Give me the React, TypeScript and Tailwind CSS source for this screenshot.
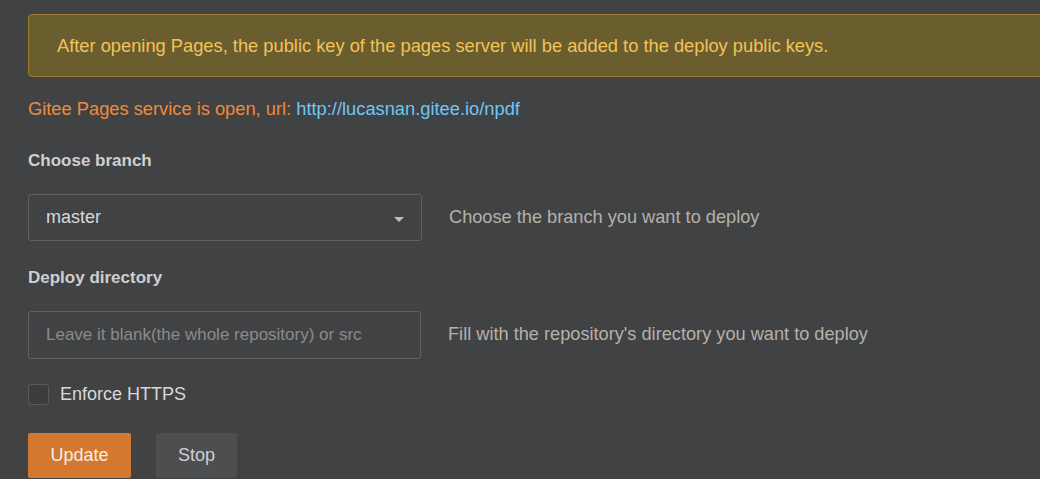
import React from "react";

export default function App() {
  return (
    <div
      className="w-[1040px] h-[479px] overflow-hidden bg-[#414244] pl-[28px] pt-[14px]"
      style={{ fontFamily: '"Liberation Sans", Arial, sans-serif' }}
    >
      <div className="w-[1100px] h-[63px] border border-[#9e7e2c] rounded-[4px] bg-[#6a5e2e] flex items-center pl-[28px] text-[18.3px] text-[#f3c25a]">
        After opening Pages, the public key of the pages server will be added to the deploy public keys.
      </div>

      <div className="mt-[21px] text-[18.3px] leading-[22px] text-[#f08a3c]">
        Gitee Pages service is open, url:{" "}
        <a className="text-[#70c6f5]">http://lucasnan.gitee.io/npdf</a>
      </div>

      <div className="mt-[31px] text-[17px] font-bold text-[#cfcfcf] leading-[20px]">Choose branch</div>

      <div className="mt-[23px] flex items-center">
        <div className="w-[394px] h-[47px] border border-[#5f6062] rounded-[3px] flex items-center justify-between pl-[17px] pr-[17px] text-[18px] text-[#d8d8d8]">
          <span>master</span>
          <svg width="10" height="5" viewBox="0 0 10 5" className="mt-[4px]">
            <path d="M0 0 L10 0 L5 5 Z" fill="#bfbfbf" />
          </svg>
        </div>
        <div className="ml-[27px] text-[18.2px] text-[#b5b1aa]">Choose the branch you want to deploy</div>
      </div>

      <div className="mt-[27px] text-[17px] font-bold text-[#cfcfcf] leading-[20px]">Deploy directory</div>

      <div className="mt-[23px] flex items-center">
        <div className="w-[393px] h-[48px] border border-[#5f6062] rounded-[3px] flex items-center pl-[17px] text-[17px] text-[#8b8b8b]">
          Leave it blank(the whole repository) or src
        </div>
        <div className="ml-[27px] text-[18.2px] text-[#b5b1aa]">Fill with the repository's directory you want to deploy</div>
      </div>

      <div className="mt-[22px] flex items-center">
        <div className="w-[21px] h-[21px] border border-[#5a5b5d] rounded-[3px] bg-[#3c3d3f]" />
        <span className="ml-[11px] text-[18px] text-[#d8d8d8]">Enforce HTTPS</span>
      </div>

      <div className="mt-[25px] flex items-start">
        <button className="w-[103px] h-[45px] rounded-[2px] bg-[#d4782f] text-[18px] text-[#f5ece2]">Update</button>
        <button className="ml-[25px] w-[81px] h-[45px] rounded-[2px] bg-[#4d4e50] text-[18px] text-[#d0d0d0]">Stop</button>
      </div>
    </div>
  );
}
